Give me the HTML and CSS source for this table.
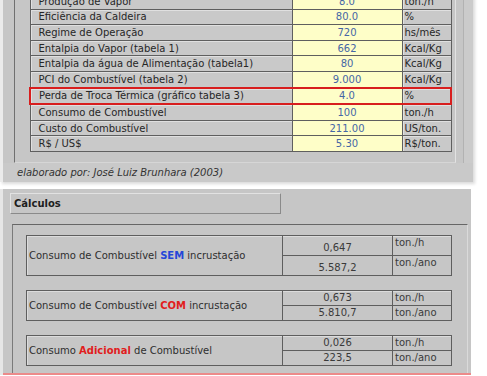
FILE: index.html
```html
<!DOCTYPE html>
<html lang="pt">
<head>
<meta charset="utf-8">
<link rel="stylesheet" href="styles.css">
</head>
<body>
<div class="page">
  <section class="top">
    <div class="frame">
      <table class="data">
        <tr><td class="lbl">Produção de Vapor</td><td class="val">8.0</td><td class="unit">ton./h</td></tr>
        <tr><td class="lbl">Eficiência da Caldeira</td><td class="val">80.0</td><td class="unit">%</td></tr>
        <tr><td class="lbl">Regime de Operação</td><td class="val">720</td><td class="unit">hs/mês</td></tr>
        <tr><td class="lbl">Entalpia do Vapor (tabela 1)</td><td class="val">662</td><td class="unit">Kcal/Kg</td></tr>
        <tr><td class="lbl">Entalpia da água de Alimentação (tabela1)</td><td class="val">80</td><td class="unit">Kcal/Kg</td></tr>
        <tr><td class="lbl">PCI do Combustível (tabela 2)</td><td class="val">9.000</td><td class="unit">Kcal/Kg</td></tr>
        <tr class="hl"><td class="lbl">Perda de Troca Térmica (gráfico tabela 3)</td><td class="val">4.0</td><td class="unit">%</td></tr>
        <tr><td class="lbl">Consumo de Combustível</td><td class="val">100</td><td class="unit">ton./h</td></tr>
        <tr><td class="lbl">Custo do Combustível</td><td class="val">211.00</td><td class="unit">US/ton.</td></tr>
        <tr><td class="lbl">R$ / US$</td><td class="val">5.30</td><td class="unit">R$/ton.</td></tr>
      </table>
    </div>
    <p class="credit">elaborado por: José Luiz Brunhara (2003)</p>
  </section>
  <section class="calc">
    <div class="calc-title">Cálculos</div>
    <div class="calc-body">
      <div class="res big">
        <div class="res-lbl">Consumo de Combustível <b class="blue">SEM</b> incrustação</div>
        <div class="res-val">0,647</div><div class="res-unit">ton./h</div>
        <div class="res-val">5.587,2</div><div class="res-unit">ton./ano</div>
      </div>
      <div class="res">
        <div class="res-lbl">Consumo de Combustível <b class="red">COM</b> incrustação</div>
        <div class="res-val">0,673</div><div class="res-unit">ton./h</div>
        <div class="res-val">5.810,7</div><div class="res-unit">ton./ano</div>
      </div>
      <div class="res">
        <div class="res-lbl">Consumo <b class="red">Adicional</b> de Combustível</div>
        <div class="res-val">0,026</div><div class="res-unit">ton./h</div>
        <div class="res-val">223,5</div><div class="res-unit">ton./ano</div>
      </div>
    </div>
    <div class="redline"></div>
  </section>
</div>
</body>
</html>
```
FILE: styles.css
```css
html, body {
  margin: 0;
  padding: 0;
  background: #ffffff;
}
body {
  width: 487px;
  height: 376px;
  overflow: hidden;
  font-family: "DejaVu Sans", Verdana, sans-serif;
  font-size: 10px;
  color: #2a2a2a;
}
.page {
  width: 487px;
}
.top {
  width: 470px;
  margin-top: -7px;
  background: #c6c6c6;
  border-left: 3px solid #ebebeb;
  box-shadow: 2px 2px 3px rgba(0,0,0,0.15), inset -9px 0 0 #cbcbcb, inset -10px 0 0 #b2b2b2;
}
.frame {
  margin-left: 11px;
  width: 426px;
  padding: 0 0 10px 14px;
  border-left: 1px solid #707070;
  border-right: 1px solid #e2e2e2;
  border-bottom: 1px solid #d6d6d6;
}
.data {
  border-collapse: collapse;
  width: 423px;
  table-layout: fixed;
}
.data td {
  height: 14.6px;
  padding: 0;
  border: 1px solid #5f5f5f;
  line-height: 13px;
  white-space: nowrap;
  overflow: hidden;
}
.data .lbl {
  width: 253px;
  background: #c9c9c9;
  padding-left: 8px;
  color: #262626;
  box-shadow: inset 1px 1px 0 #e0e0e0;
}
.data .val {
  width: 109px;
  background: #fefec8;
  text-align: center;
  color: #4566a6;
}
.data .unit {
  background: #c9c9c9;
  padding-left: 2px;
  color: #262626;
  box-shadow: inset 1px 1px 0 #e0e0e0;
}
.data .hl td {
  border-top: 2px solid #d81e1e;
  border-bottom: 2px solid #d81e1e;
}
.data .hl td:first-child {
  border-left: 2px solid #d81e1e;
}
.data .hl td:last-child {
  border-right: 2px solid #d81e1e;
}
.credit {
  margin: 0;
  height: 19px;
  line-height: 19px;
  padding-left: 14px;
  font-style: italic;
  color: #333;
  font-size: 10px;
  background: #c9c9c9;
}
.calc {
  margin-top: 7px;
  width: 468px;
  background: #c6c6c6;
  border-left: 3px solid #e6e6e6;
  padding-top: 4px;
}
.calc-title {
  margin-left: 7px;
  width: 266px;
  height: 19px;
  line-height: 19px;
  padding-left: 3px;
  font-weight: bold;
  color: #1e1e1e;
  border: 1px solid #8a8a8a;
  border-top-color: #e2e2e2;
  border-left-color: #e2e2e2;
}
.calc-body {
  margin: 10px 0 0 9px;
  width: 441px;
  border-top: 1px solid #666;
  border-left: 1px solid #7a7a7a;
  border-right: 1px solid #dadada;
  padding: 10px 0 7px 13px;
  display: flex;
  flex-direction: column;
  gap: 14px;
}
.res {
  width: 424px;
  display: grid;
  grid-template-columns: 255px 110px 59px;
  grid-template-rows: 15px 14px;
  border: 1px solid #5e5e5e;
  box-shadow: inset 1px 1px 0 #dcdcdc;
}
.res.big {
  grid-template-rows: 20px 19px;
}
.res-lbl {
  grid-row: 1 / 3;
  grid-column: 1;
  align-self: center;
  padding-left: 2px;
  font-size: 10px;
  color: #2e2e2e;
}
.res-val {
  border-left: 1px solid #5e5e5e;
  text-align: center;
  color: #3a3a3a;
  font-size: 10px;
  line-height: 14px;
  display: flex;
  align-items: flex-end;
  justify-content: center;
}
.res-unit {
  border-left: 1px solid #5e5e5e;
  padding-left: 2px;
  color: #3a3a3a;
  font-size: 10px;
  line-height: 14px;
}
.res-val:nth-of-type(2), .res-unit:nth-of-type(3) {
  border-bottom: 1px solid #5e5e5e;
}
.blue { color: #2446d8; }
.red { color: #e11d1d; }
.redline {
  height: 2px;
  background: #ec8a8a;
}
```
